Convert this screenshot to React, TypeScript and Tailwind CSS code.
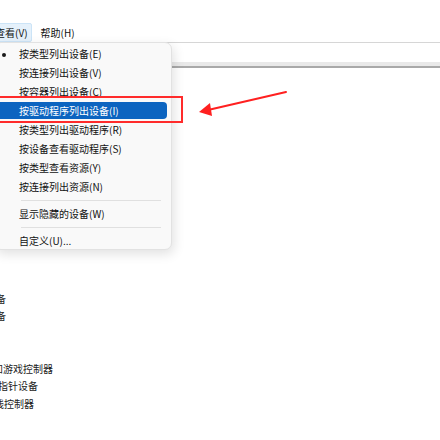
import React from "react";

const items: { label: string; bullet?: boolean; active?: boolean }[] = [
  { label: "按类型列出设备(E)", bullet: true },
  { label: "按连接列出设备(V)" },
  { label: "按容器列出设备(C)" },
  { label: "按驱动程序列出设备(I)", active: true },
  { label: "按类型列出驱动程序(R)" },
  { label: "按设备查看驱动程序(S)" },
  { label: "按类型查看资源(Y)" },
  { label: "按连接列出资源(N)" },
];

const tree: { label: string; ml: number }[] = [
  { label: "人机接口设备", ml: -54 },
  { label: "生物识别设备", ml: -54 },
  { label: "软件设备", ml: -54 },
  { label: "软件组件", ml: -54 },
  { label: "声音、视频和游戏控制器", ml: -57 },
  { label: "鼠标和其他指针设备", ml: -52 },
  { label: "通用串行总线控制器", ml: -56 },
];

function Row({ label, bullet, active }: { label: string; bullet?: boolean; active?: boolean }) {
  return (
    <div className="h-[19px] flex items-center relative">
      {active ? (
        <div className="absolute left-[-4px] right-[4px] top-[1px] bottom-[1px] bg-[#0c64c0] rounded-[4px]" />
      ) : null}
      {bullet ? (
        <span className="absolute left-[1px] top-[9px] w-[4px] h-[4px] rounded-full bg-[#1b1b1b]" />
      ) : null}
      <span className={"relative ml-[18px] " + (active ? "text-white" : "text-[#111111]")}>{label}</span>
    </div>
  );
}

export default function App() {
  return (
    <div
      className="w-[440px] h-[440px] bg-white relative overflow-hidden text-[10px] leading-none"
      style={{ fontFamily: '"Noto Sans CJK SC", "Noto Sans", sans-serif' }}
    >
      <div className="h-[23px]" />
      {/* menubar */}
      <div className="h-[19px] flex items-center">
        <div className="h-[19px] ml-[-10px] pl-[4px] pr-[3px] flex items-center bg-[#e5f1fb] border border-[#cce4f7] rounded-[2px] text-[#111111]">
          查看(V)
        </div>
        <div className="ml-[9px] text-[#111111]">帮助(H)</div>
      </div>
      {/* toolbar */}
      <div className="border-t border-[#d6d6d6] h-[20px]" />
      <div className="h-[4px] bg-[#e9e9e9]" />
      <div className="h-[2px] bg-[#a9a9a9]" />
      {/* tree */}
      <div className="mt-[222px] text-[#222222] whitespace-nowrap">
        {tree.map((t) => (
          <div key={t.label} className="h-[17.5px] flex items-center">
            <span style={{ marginLeft: t.ml }}>{t.label}</span>
          </div>
        ))}
      </div>

      {/* dropdown menu */}
      <div className="absolute left-[-6px] top-[42px] w-[178px] h-[208px] bg-[#f9f9f9] border border-[#e2e2e2] rounded-[7px] shadow-[2px_4px_12px_rgba(0,0,0,0.12)] overflow-hidden pt-[1px]">
        <div className="pl-[6px]">
          {items.map((it) => (
            <Row key={it.label} {...it} />
          ))}
          <div className="h-[8px] flex items-center">
            <div className="ml-[20px] mr-[10px] flex-1 h-px bg-[#e0e0e0]" />
          </div>
          <Row label="显示隐藏的设备(W)" />
          <div className="h-[8px] flex items-center">
            <div className="ml-[20px] mr-[10px] flex-1 h-px bg-[#e0e0e0]" />
          </div>
          <Row label="自定义(U)..." />
        </div>
      </div>

      {/* red highlight box */}
      <div className="absolute left-[-2px] top-[96px] w-[185px] h-[27px] border-2 border-[#ff2b2b]" />

      {/* arrow */}
      <svg className="absolute left-0 top-0" width="440" height="440" viewBox="0 0 440 440">
        <line x1="286" y1="92" x2="208" y2="110" stroke="#ff2020" strokeWidth="2" strokeLinecap="round" />
        <polygon points="199,112 210,103 212,116" fill="#ff2020" />
      </svg>
    </div>
  );
}
